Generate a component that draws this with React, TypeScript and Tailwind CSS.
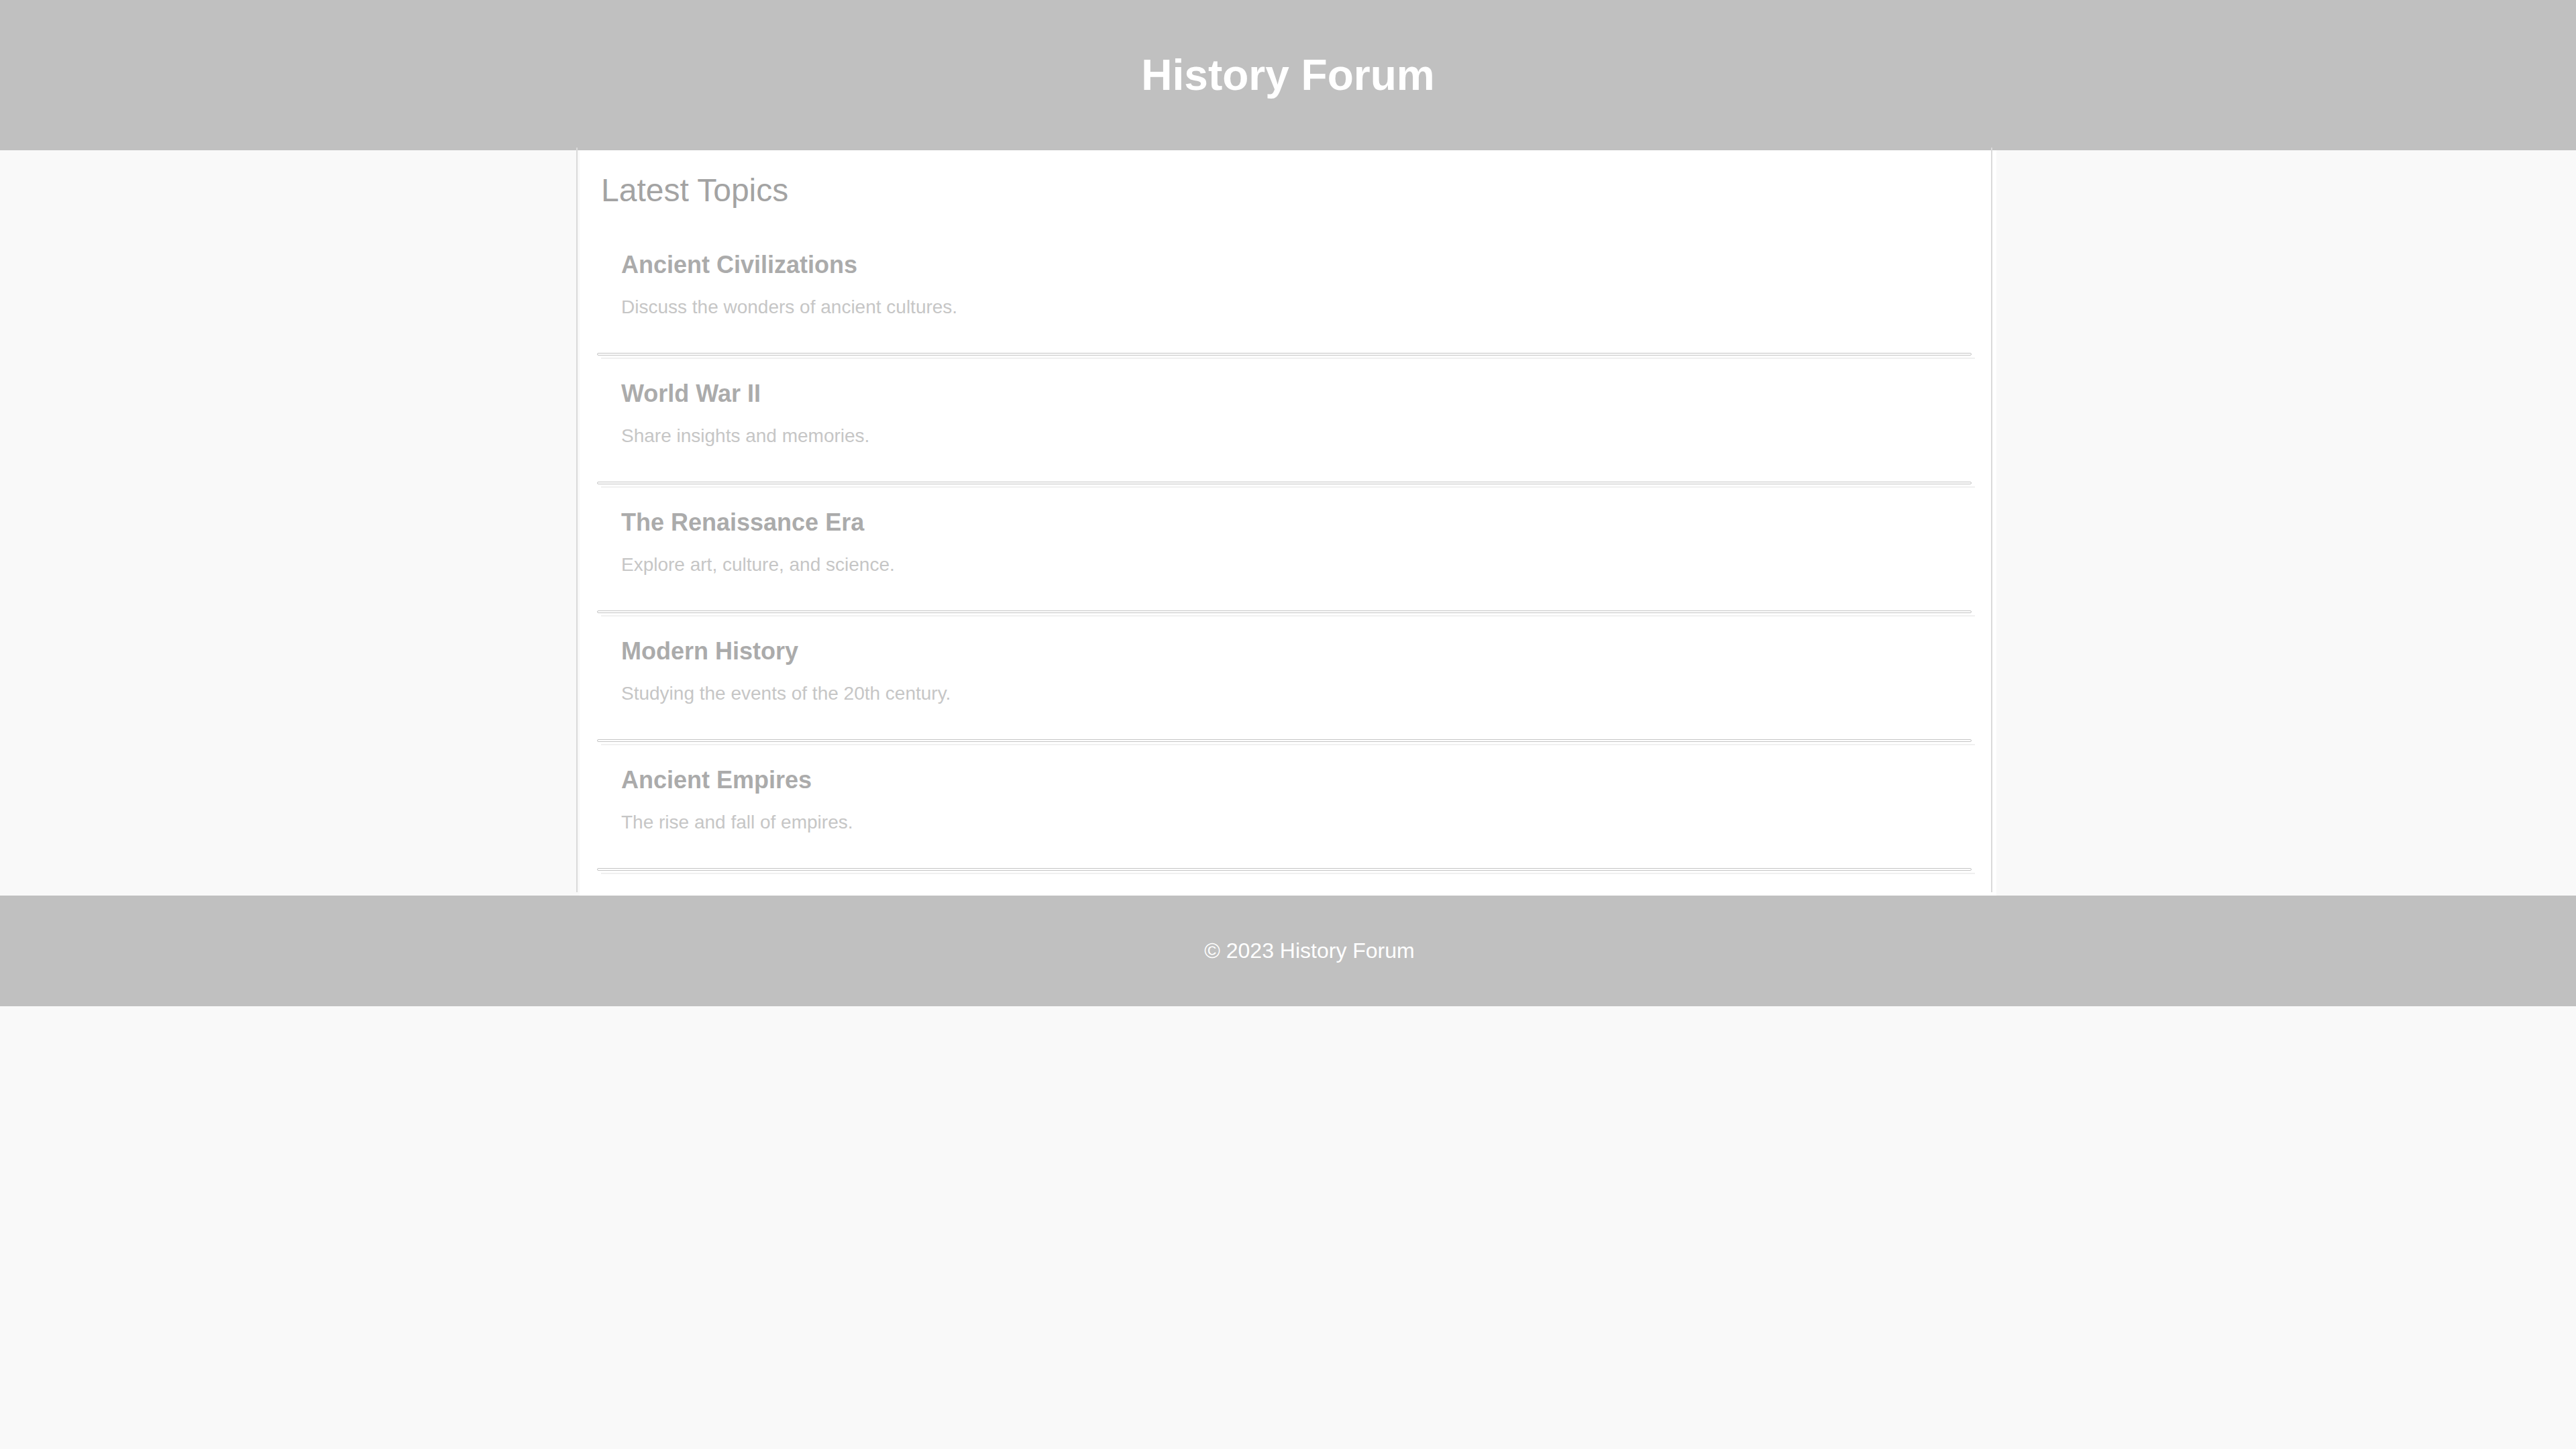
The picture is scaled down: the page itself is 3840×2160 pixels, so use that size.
import React from "react";

const topics = [
  { title: "Ancient Civilizations", desc: "Discuss the wonders of ancient cultures." },
  { title: "World War II", desc: "Share insights and memories." },
  { title: "The Renaissance Era", desc: "Explore art, culture, and science." },
  { title: "Modern History", desc: "Studying the events of the 20th century." },
  { title: "Ancient Empires", desc: "The rise and fall of empires." },
];

export default function App() {
  return (
    <div className="min-h-[2160px] w-full bg-[#f9f9f9] font-['Liberation_Sans',Arial,sans-serif]">
      <header className="bg-[#c0c0c0] py-[75px] text-center">
        <h1 className="text-[64px] font-bold leading-[74px] text-white">History Forum</h1>
      </header>
      <main className="relative mx-auto w-[2112px] bg-white p-8">
        <div className="pointer-events-none absolute top-[-4px] bottom-[5px] left-[-5px] right-[6px] border-x-2 border-[#dadada]" />
        <h2 className="mb-8 text-[48px] leading-[55px] text-[#a3a3a3]">Latest Topics</h2>
        <ul>
          {topics.map((t) => (
            <li key={t.title} className="relative border-b-2 border-[#f0f0f0] pl-[30px] pr-8 pt-[31px] pb-[59px]">
              <h3 className="text-[36px] font-bold leading-[41px] text-[#ababab]">{t.title}</h3>
              <p className="mt-[27px] text-[28px] leading-[32px] text-[#c6c6c6]">{t.desc}</p>
              <div className="pointer-events-none absolute bottom-[3px] left-[-6px] right-[5px] h-[4px] rounded-full border border-[#c4c4c4]" />
            </li>
          ))}
        </ul>
      </main>
      <footer className="bg-[#c0c0c0] py-16 pl-16 text-center">
        <p className="text-[32px] leading-[37px] text-white">© 2023 History Forum</p>
      </footer>
    </div>
  );
}
